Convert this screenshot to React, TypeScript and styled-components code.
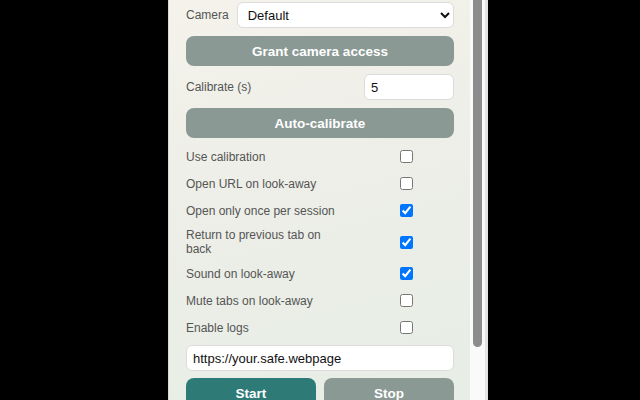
import React from "react";
import styled, { createGlobalStyle } from "styled-components";

const Global = createGlobalStyle`
  html, body { margin: 0; padding: 0; background: #000; }
  body { font-family: "Liberation Sans", Arial, sans-serif; }
  * { box-sizing: border-box; }
`;

const Stage = styled.div`
  display: flex;
  justify-content: center;
  padding-left: 16px;
  height: 400px;
  background: #000;
`;

const Panel = styled.div`
  width: 320px;
  height: 400px;
  display: flex;
  overflow: hidden;
  border-left: 1px solid #d9d9d4;
  border-right: 3px solid #e3e3e3;
`;

const Body = styled.div`
  flex: 1;
  min-width: 0;
  background: linear-gradient(165deg, #f4f2eb 0%, #eceee7 50%, #e7eee6 100%);
`;

const ScrollTrack = styled.div`
  width: 15px;
  flex: none;
  background: #fafafa;
  padding: 0 3px;
`;

const ScrollThumb = styled.div`
  height: 347px;
  background: #8c8c8c;
  border-radius: 0 0 5px 5px;
`;

const Content = styled.div`
  display: flex;
  flex-direction: column;
  gap: 8px;
  padding: 2px 16px 53px 17px;
`;

const FieldRow = styled.div`
  display: flex;
  align-items: center;
  justify-content: space-between;
  gap: 8px;
`;

const Label = styled.span`
  font-size: 12px;
  line-height: 14px;
  color: #555;
`;

const Select = styled.select`
  flex: 1;
  height: 26px;
  font-family: "Liberation Sans", Arial, sans-serif;
  font-size: 13px;
  color: #111;
  background: #fff;
  border: 1px solid #dcdcdc;
  border-radius: 6px;
  padding: 0 4px 0 6px;
`;

const TextInput = styled.input<{ $width?: string }>`
  width: ${(p) => p.$width || "100%"};
  height: 26px;
  font-family: "Liberation Sans", Arial, sans-serif;
  font-size: 13px;
  color: #111;
  background: #fff;
  border: 1px solid #dcdcdc;
  border-radius: 6px;
  padding: 0 6px;
  outline: none;
`;

const Button = styled.button<{ $tone?: "primary" | "muted" }>`
  height: 30px;
  width: 100%;
  border: none;
  border-radius: 8px;
  background: ${(p) => (p.$tone === "primary" ? "#2d7a77" : "#8a9994")};
  color: #fff;
  font-family: "Liberation Sans", Arial, sans-serif;
  font-size: 13.5px;
  font-weight: bold;
  cursor: pointer;
`;

const CheckList = styled.div`
  display: flex;
  flex-direction: column;
  gap: 8px;
  padding-top: 1px;
`;

const CheckRow = styled.label`
  display: grid;
  grid-template-columns: 1fr 96px;
  align-items: center;
`;

const CheckLabel = styled(Label)`
  max-width: 150px;
`;

const Check = styled.input`
  justify-self: center;
  width: 13px;
  height: 13px;
  margin: 3px 3px 3px 4px;
`;

const ButtonPair = styled.div`
  display: grid;
  grid-template-columns: 1fr 1fr;
  gap: 8px;
  margin-top: -1px;
`;

const options: { label: string; checked: boolean }[] = [
  { label: "Use calibration", checked: false },
  { label: "Open URL on look-away", checked: false },
  { label: "Open only once per session", checked: true },
  { label: "Return to previous tab on back", checked: true },
  { label: "Sound on look-away", checked: true },
  { label: "Mute tabs on look-away", checked: false },
  { label: "Enable logs", checked: false },
];

export default function App() {
  return (
    <>
      <Global />
      <Stage>
        <Panel>
          <Body>
            <Content>
              <FieldRow>
                <Label>Camera</Label>
                <Select defaultValue="default">
                  <option value="default">Default</option>
                </Select>
              </FieldRow>
              <Button $tone="muted">Grant camera access</Button>
              <FieldRow>
                <Label>Calibrate (s)</Label>
                <TextInput $width="90px" defaultValue="5" />
              </FieldRow>
              <Button $tone="muted">Auto-calibrate</Button>
              <CheckList>
                {options.map((o) => (
                  <CheckRow key={o.label}>
                    <CheckLabel>{o.label}</CheckLabel>
                    <Check type="checkbox" defaultChecked={o.checked} />
                  </CheckRow>
                ))}
              </CheckList>
              <TextInput defaultValue="https://your.safe.webpage" />
              <ButtonPair>
                <Button $tone="primary">Start</Button>
                <Button $tone="muted">Stop</Button>
              </ButtonPair>
            </Content>
          </Body>
          <ScrollTrack>
            <ScrollThumb />
          </ScrollTrack>
        </Panel>
      </Stage>
    </>
  );
}
